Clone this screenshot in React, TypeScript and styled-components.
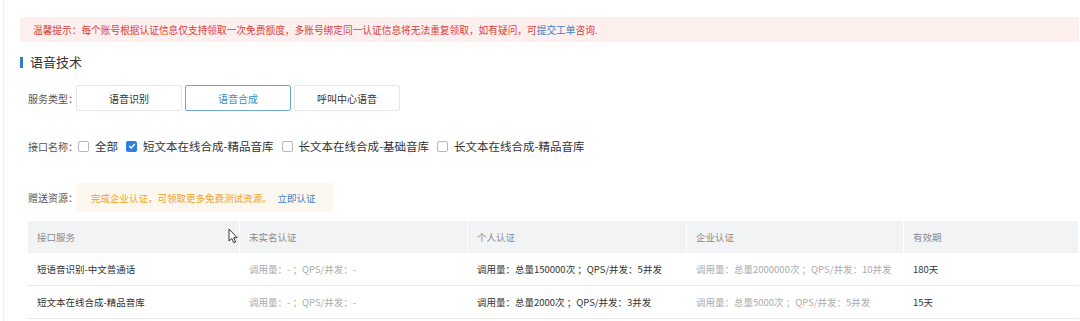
import styled, { createGlobalStyle } from "styled-components";

const GlobalStyle = createGlobalStyle`
  html, body {
    margin: 0;
    padding: 0;
    background: #fff;
    overflow: hidden;
  }
  body {
    font-family: "Noto Sans CJK SC", "Liberation Sans", sans-serif;
    color: #333;
  }
`;

const BLUE = "#2f7fd1";

const Page = styled.div`
  width: 1076px;
  height: 321px;
  box-sizing: border-box;
  padding: 17px 0 0 16px;
  border-left: 1px solid #efefef;
  margin-left: 3px;
  position: relative;
  overflow: hidden;
`;

const Notice = styled.div`
  height: 25px;
  margin-right: -20px;
  display: flex;
  align-items: center;
  padding-left: 13px;
  background: #fdefee;
  border-radius: 3px;
  color: #d9403a;
  font-size: 9.7px;
  white-space: nowrap;
`;

const NoticeLink = styled.a`
  color: #3c7fc6;
  text-decoration: none;
`;

const SectionTitle = styled.h2`
  margin: 11px 0 0;
  display: flex;
  align-items: center;
  gap: 7px;
  font-size: 13px;
  font-weight: 400;
  color: #333;
  line-height: 18px;

  &::before {
    content: "";
    width: 3px;
    height: 11px;
    background: ${BLUE};
  }
`;

const Row = styled.div<{ $top: number }>`
  display: flex;
  align-items: center;
  padding-left: 8px;
  margin-top: ${({ $top }) => $top}px;
`;

const Label = styled.span`
  font-size: 10px;
  color: #555;
  white-space: nowrap;
  width: 48px;
`;

const ButtonGroup = styled.div`
  display: flex;
  gap: 3px;
`;

const TypeButton = styled.button<{ $active?: boolean }>`
  width: 106px;
  height: 26px;
  box-sizing: border-box;
  background: #fff;
  border: 1px solid ${({ $active }) => ($active ? "#6ea8d2" : "#e6e6e6")};
  border-radius: 2px;
  font-family: inherit;
  font-size: 10px;
  color: ${({ $active }) => ($active ? "#3f8ccb" : "#333")};
  padding: 0;
`;

const CheckList = styled.div`
  display: flex;
  align-items: center;
  gap: 8px;
  margin-left: 2px;
`;

const CheckItem = styled.label`
  display: flex;
  align-items: center;
  gap: 6px;
  font-size: 11.5px;
  color: #333;
  white-space: nowrap;
`;

const Box = styled.span<{ $checked?: boolean }>`
  width: 11px;
  height: 11px;
  box-sizing: border-box;
  border-radius: 2px;
  border: 1px solid ${({ $checked }) => ($checked ? "#2f7fe0" : "#b8b8b8")};
  background: ${({ $checked }) => ($checked ? "#2f7fe0" : "#fff")};
  display: flex;
  align-items: center;
  justify-content: center;
`;

const GiftBox = styled.div`
  display: flex;
  align-items: center;
  height: 29px;
  width: 257px;
  box-sizing: border-box;
  padding-left: 15px;
  background: #fdf8ef;
  font-size: 9.5px;
  color: #eea21f;
  white-space: nowrap;
`;

const GiftLink = styled.a`
  color: #3c7fc6;
  text-decoration: none;
  margin-left: 6px;
`;

const Table = styled.div`
  margin: 9px 0 0 8px;
  display: grid;
  grid-template-columns: 212px 228px 219px 217px 1fr;
  font-size: 9.5px;
`;

const HeadCell = styled.div`
  height: 32px;
  display: flex;
  align-items: center;
  padding-left: 9px;
  background: #f2f3f5;
  color: #8a8a8a;
  border-right: 1px solid #fff;
  white-space: nowrap;
`;

const Cell = styled.div<{ $muted?: boolean }>`
  height: 33px;
  box-sizing: border-box;
  display: flex;
  align-items: center;
  padding-left: 9px;
  border-bottom: 1px solid #e9e9e9;
  color: ${({ $muted }) => ($muted ? "#ababab" : "#333")};
  white-space: nowrap;
`;

const Cursor = styled.svg`
  position: absolute;
  left: 224px;
  top: 228px;
`;

const Check = () => (
  <svg width="8" height="8" viewBox="0 0 8 8">
    <path d="M1.3 4.1 L3.2 6 L6.8 2" stroke="#fff" strokeWidth="1.4" fill="none" />
  </svg>
);

type Option = { label: string; checked?: boolean };

const options: Option[] = [
  { label: "全部" },
  { label: "短文本在线合成-精品音库", checked: true },
  { label: "长文本在线合成-基础音库" },
  { label: "长文本在线合成-精品音库" },
];

const headers = ["接口服务", "未实名认证", "个人认证", "企业认证", "有效期"];

const rows = [
  [
    "短语音识别-中文普通话",
    "调用量：- ；QPS/并发：-",
    "调用量：总量150000次 ；QPS/并发：5并发",
    "调用量：总量2000000次 ；QPS/并发：10并发",
    "180天",
  ],
  [
    "短文本在线合成-精品音库",
    "调用量：- ；QPS/并发：-",
    "调用量：总量2000次 ；QPS/并发：3并发",
    "调用量：总量5000次 ；QPS/并发：5并发",
    "15天",
  ],
];

const mutedCols = [1, 3];

const App = () => {
  return (
    <Page>
      <GlobalStyle />
      <Notice>
        温馨提示：每个账号根据认证信息仅支持领取一次免费额度，多账号绑定同一认证信息将无法重复领取，如有疑问，可
        <NoticeLink>提交工单</NoticeLink>咨询.
      </Notice>
      <SectionTitle>语音技术</SectionTitle>
      <Row $top={14}>
        <Label>服务类型：</Label>
        <ButtonGroup>
          <TypeButton>语音识别</TypeButton>
          <TypeButton $active>语音合成</TypeButton>
          <TypeButton>呼叫中心语音</TypeButton>
        </ButtonGroup>
      </Row>
      <Row $top={27}>
        <Label>接口名称：</Label>
        <CheckList>
          {options.map((o) => (
            <CheckItem key={o.label}>
              <Box $checked={o.checked}>{o.checked ? <Check /> : null}</Box>
              {o.label}
            </CheckItem>
          ))}
        </CheckList>
      </Row>
      <Row $top={29}>
        <Label>赠送资源：</Label>
        <GiftBox>
          完成企业认证，可领取更多免费测试资源。
          <GiftLink>立即认证</GiftLink>
        </GiftBox>
      </Row>
      <Table>
        {headers.map((h) => (
          <HeadCell key={h}>{h}</HeadCell>
        ))}
        {rows.map((r, i) =>
          r.map((c, j) => (
            <Cell key={`${i}-${j}`} $muted={mutedCols.includes(j)}>
              {c}
            </Cell>
          ))
        )}
      </Table>
      <Cursor width="10" height="16" viewBox="0 0 10 16">
        <path
          d="M1 1 L1 13 L3.8 10.4 L5.8 14.8 L7.6 14 L5.7 9.7 L9.2 9.7 Z"
          fill="#fff"
          stroke="#333"
          strokeWidth="1"
          strokeLinejoin="round"
        />
      </Cursor>
    </Page>
  );
};

export default App;
